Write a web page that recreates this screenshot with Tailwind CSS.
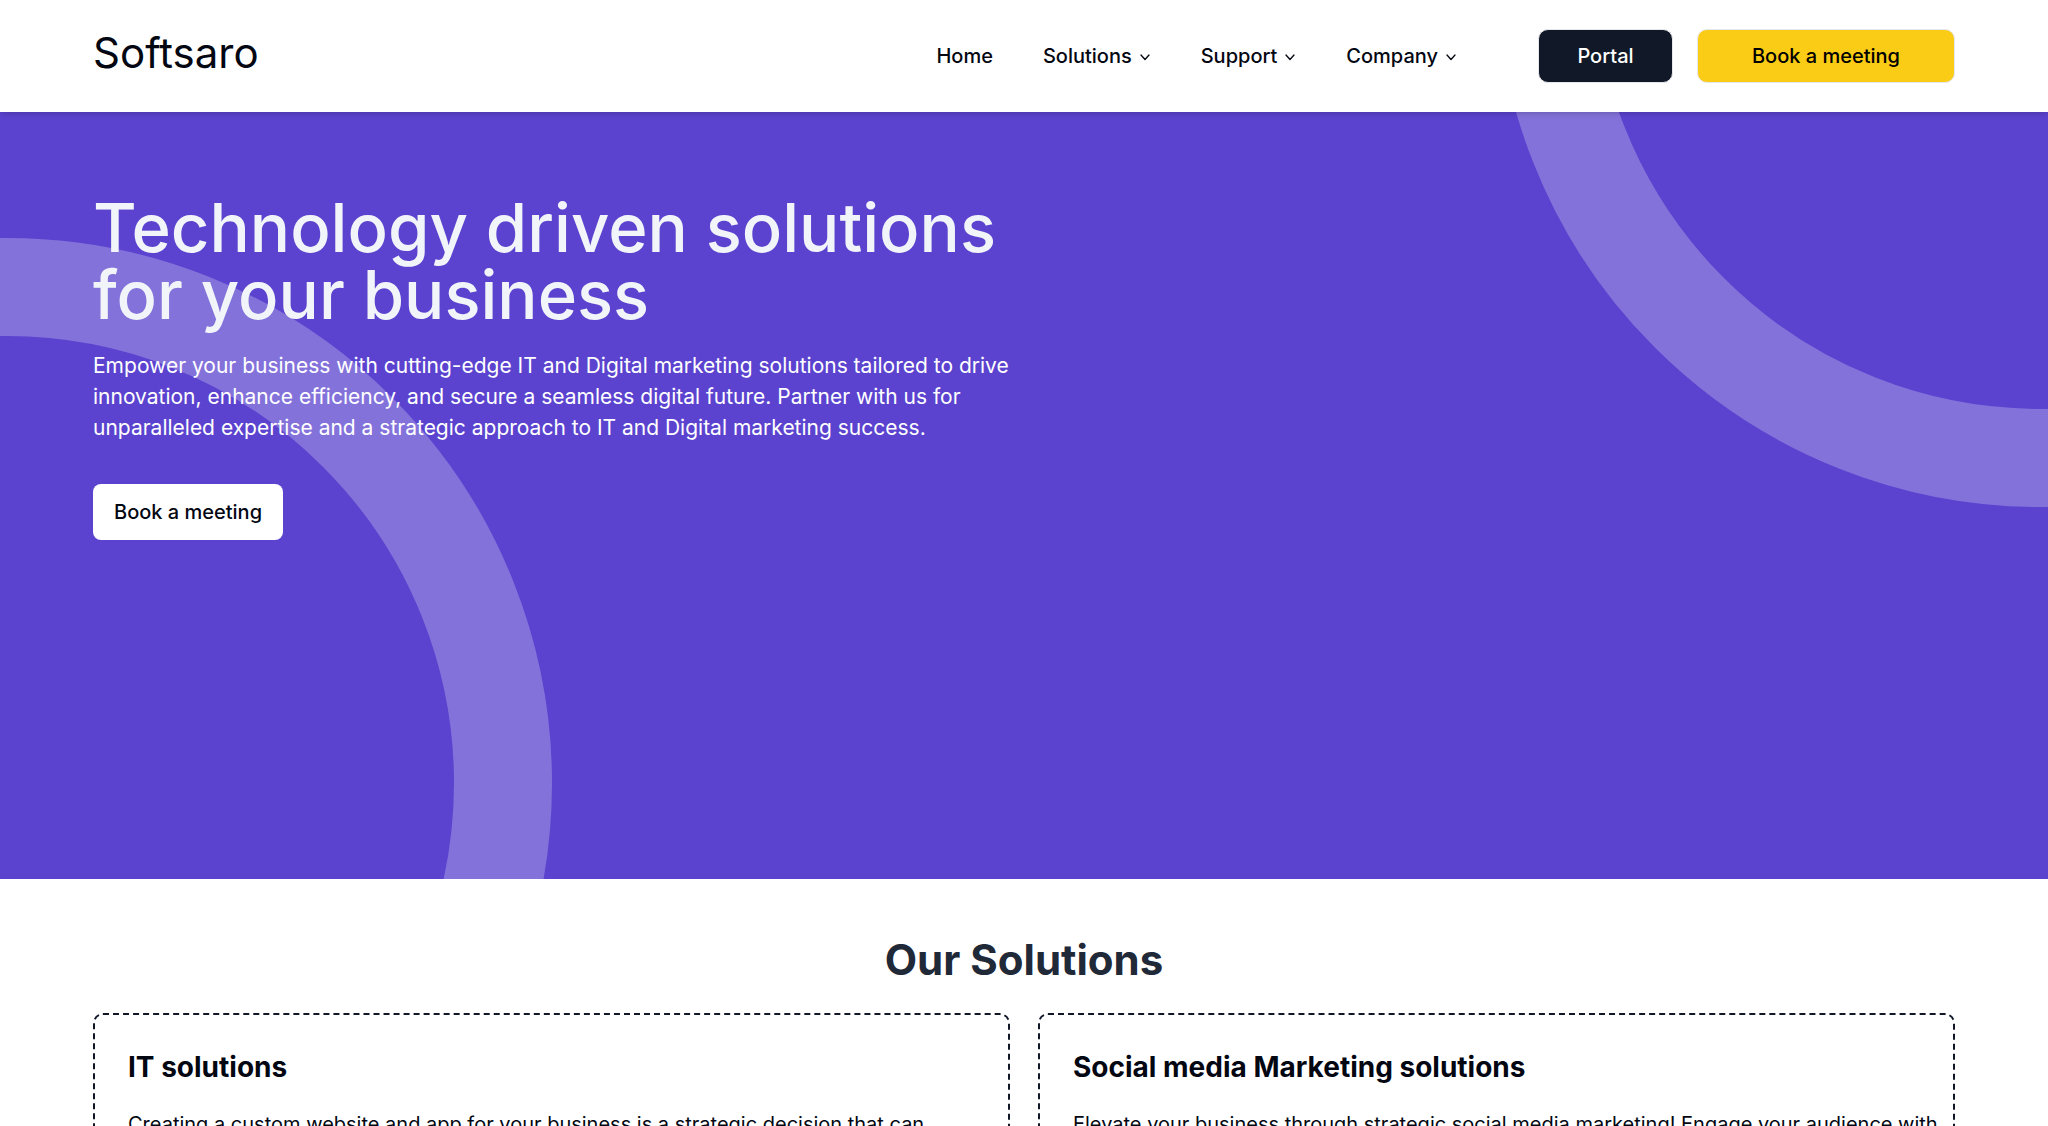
<!DOCTYPE html>
<html lang="en">
<head>
    <meta charset="UTF-8">
    <meta name="viewport" content="width=device-width, initial-scale=1.0">
    <title>Softsaro</title>
    <script src="https://cdn.jsdelivr.net/npm/@tailwindcss/browser@4"></script>
    <style>
        body {
            font-family: 'Inter', sans-serif;
        }
    </style>
</head>
<body class="bg-white text-gray-950 text-[21px] leading-[31px] overflow-x-hidden">

    <!-- Header -->
    <header class="relative z-10 bg-white shadow-md h-[112px] px-[93px] flex items-center justify-between">
        <a href="#" class="text-[42px] leading-[48px] pb-[6px]">Softsaro</a>

        <div class="flex items-center">
            <nav class="flex items-center gap-[50px] text-[20px] font-medium mr-[81px]">
                <a href="#">Home</a>
                <button type="button" class="flex items-center gap-[7px]">
                    Solutions
                    <svg class="w-3 h-3 mt-[2px]" viewBox="0 0 12 12" fill="none" stroke="currentColor" stroke-width="1.3" stroke-linecap="round" stroke-linejoin="round"><path d="M2 4l4 4.5 4-4.5" /></svg>
                </button>
                <button type="button" class="flex items-center gap-[7px]">
                    Support
                    <svg class="w-3 h-3 mt-[2px]" viewBox="0 0 12 12" fill="none" stroke="currentColor" stroke-width="1.3" stroke-linecap="round" stroke-linejoin="round"><path d="M2 4l4 4.5 4-4.5" /></svg>
                </button>
                <button type="button" class="flex items-center gap-[7px]">
                    Company
                    <svg class="w-3 h-3 mt-[2px]" viewBox="0 0 12 12" fill="none" stroke="currentColor" stroke-width="1.3" stroke-linecap="round" stroke-linejoin="round"><path d="M2 4l4 4.5 4-4.5" /></svg>
                </button>
            </nav>
            <div class="flex items-center gap-6 text-[20px] font-medium">
                <a href="#" class="w-[135px] h-[54px] flex items-center justify-center rounded-[10px] border border-gray-200 bg-[#111827] text-white">Portal</a>
                <a href="#" class="w-[258px] h-[54px] flex items-center justify-center rounded-[10px] border border-gray-200 bg-[#facc15] text-black">Book a meeting</a>
            </div>
        </div>
    </header>

    <!-- Hero -->
    <section class="relative overflow-hidden bg-[#5b43cf] h-[767px] px-[93px] pt-[82px]">
        <!-- decorative rings -->
        <div class="absolute -left-[538px] top-[126px] w-[1090px] h-[1090px] rounded-full border-[98px] border-white/25"></div>
        <div class="absolute -right-[537px] -top-[695px] w-[1090px] h-[1090px] rounded-full border-[98px] border-white/25"></div>

        <div class="relative max-w-[930px]">
            <h1 class="text-[67px] leading-[67px] font-medium text-slate-100">Technology driven solutions for your business</h1>
            <p class="mt-[22px] text-white">
                Empower your business with cutting-edge IT and Digital marketing solutions tailored to drive innovation, enhance efficiency, and secure a seamless digital future. Partner with us for unparalleled expertise and a strategic approach to IT and Digital marketing success.
            </p>
            <a href="#" class="mt-[41px] inline-flex items-center h-[56px] px-[21px] rounded-lg bg-white text-[20px] font-medium">Book a meeting</a>
        </div>
    </section>

    <!-- Solutions -->
    <section class="px-[93px] pt-[57px]">
        <h2 class="text-[42px] leading-[48px] font-bold text-[#1f2937] text-center">Our Solutions</h2>
        <div class="mt-[29px] grid grid-cols-2 gap-[28px]">
            <article class="rounded-[10px] border-2 border-dashed border-gray-900 p-[33px] pr-2">
                <h3 class="text-[28px] leading-[38px] font-bold">IT solutions</h3>
                <p class="mt-[23px] text-[20px]">Creating a custom website and app for your business is a strategic decision that can</p>
            </article>
            <article class="rounded-[10px] border-2 border-dashed border-gray-900 p-[33px] pr-2">
                <h3 class="text-[28px] leading-[38px] font-bold">Social media Marketing solutions</h3>
                <p class="mt-[23px] text-[20px]">Elevate your business through strategic social media marketing! Engage your audience with</p>
            </article>
        </div>
    </section>

</body>
</html>
